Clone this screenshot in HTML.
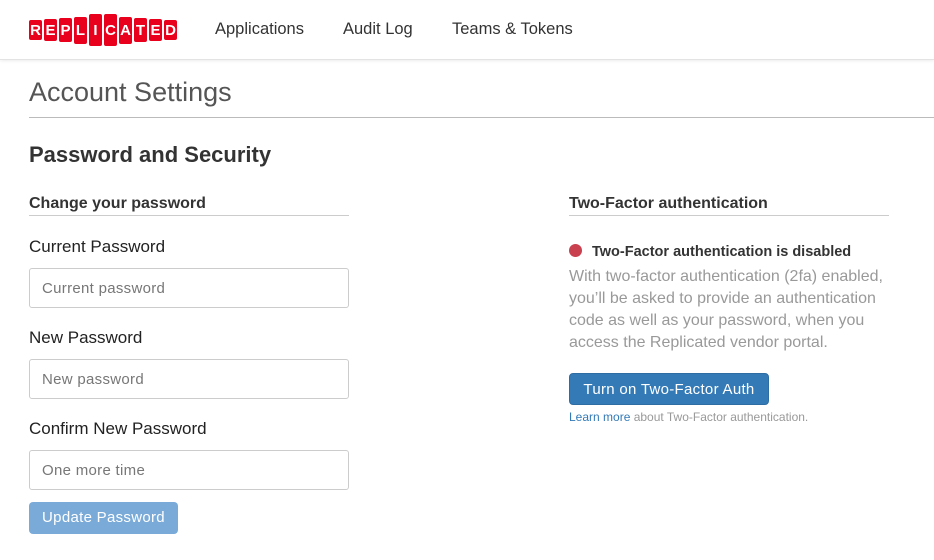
<!DOCTYPE html>
<html><head><style>
*{box-sizing:border-box;margin:0;padding:0}
body{width:934px;height:560px;overflow:hidden;background:#fff;font-family:"Liberation Sans",Arial,sans-serif;color:#333;position:relative}
.nav{position:absolute;left:0;top:0;width:934px;height:60px;border-bottom:1px solid #e3e3e3;box-shadow:0 1px 3px rgba(0,0,0,.08)}
.logo{position:absolute;left:29px;top:14px;height:32px;display:flex;align-items:center;gap:2px}
.logo span{background:#e8001c;color:#fff;font-weight:bold;font-size:15px;width:13px;text-align:center;border-radius:2px;display:flex;align-items:center;justify-content:center}
.nl{position:absolute;top:20px;font-size:16.5px;color:#333}
.abs{position:absolute}
h1{position:absolute;left:29px;top:77px;font-size:27px;font-weight:normal;color:#555;font-family:"Liberation Sans",sans-serif}
.hr{position:absolute;height:1px;background:#ccc}
.inp{position:absolute;left:29px;width:320px;height:40px;border:1px solid #ccc;border-radius:3px;font-size:15px;color:#777;padding:11px 12px;letter-spacing:.3px}
.lbl{position:absolute;left:29px;font-size:17px;color:#222}
.btn{position:absolute;border-radius:4px;color:#fff;font-size:15px;text-align:center;letter-spacing:.3px}
</style></head><body>
<div class="nav">
<div class="logo">
<span style="height:20px">R</span><span style="height:22px">E</span><span style="height:24px">P</span><span style="height:27px">L</span><span style="height:32px">I</span><span style="height:32px">C</span><span style="height:27px">A</span><span style="height:24px">T</span><span style="height:22px">E</span><span style="height:20px">D</span>
</div>
<div class="nl" style="left:215px">Applications</div>
<div class="nl" style="left:343px">Audit Log</div>
<div class="nl" style="left:452px">Teams &amp; Tokens</div>
</div>
<h1>Account Settings</h1>
<div class="hr" style="left:29px;top:117px;width:905px;background:#bbb"></div>
<div class="abs" style="left:29px;top:142px;font-size:22px;font-weight:bold;color:#333">Password and Security</div>
<div class="abs" style="left:29px;top:195px;font-size:16px;font-weight:bold">Change your password</div>
<div class="hr" style="left:29px;top:215px;width:320px"></div>
<div class="lbl" style="top:237px">Current Password</div>
<div class="inp" style="top:268px">Current password</div>
<div class="lbl" style="top:328px">New Password</div>
<div class="inp" style="top:359px">New password</div>
<div class="lbl" style="top:419px">Confirm New Password</div>
<div class="inp" style="top:450px">One more time</div>
<div class="btn" style="left:29px;top:502px;width:149px;height:32px;line-height:32px;background:#7aaad8">Update Password</div>

<div class="abs" style="left:569px;top:195px;font-size:16px;font-weight:bold">Two-Factor authentication</div>
<div class="hr" style="left:569px;top:215px;width:320px"></div>
<div class="abs" style="left:569px;top:244px;width:13px;height:13px;border-radius:50%;background:#c9404e"></div>
<div class="abs" style="left:592px;top:244px;font-size:14.5px;font-weight:bold">Two-Factor authentication is disabled</div>
<div class="abs" style="left:569px;top:266px;width:330px;font-size:16px;line-height:22px;color:#999">With two-factor authentication (2fa) enabled, you’ll be asked to provide an authentication code as well as your password, when you access the Replicated vendor portal.</div>
<div class="btn" style="left:569px;top:373px;width:200px;height:32px;line-height:31px;background:#337ab7;border:1px solid #2e6da4">Turn on Two-Factor Auth</div>
<div class="abs" style="left:569px;top:410px;font-size:12px;color:#999"><span style="color:#337ab7">Learn more</span> about Two-Factor authentication.</div>
</body></html>
